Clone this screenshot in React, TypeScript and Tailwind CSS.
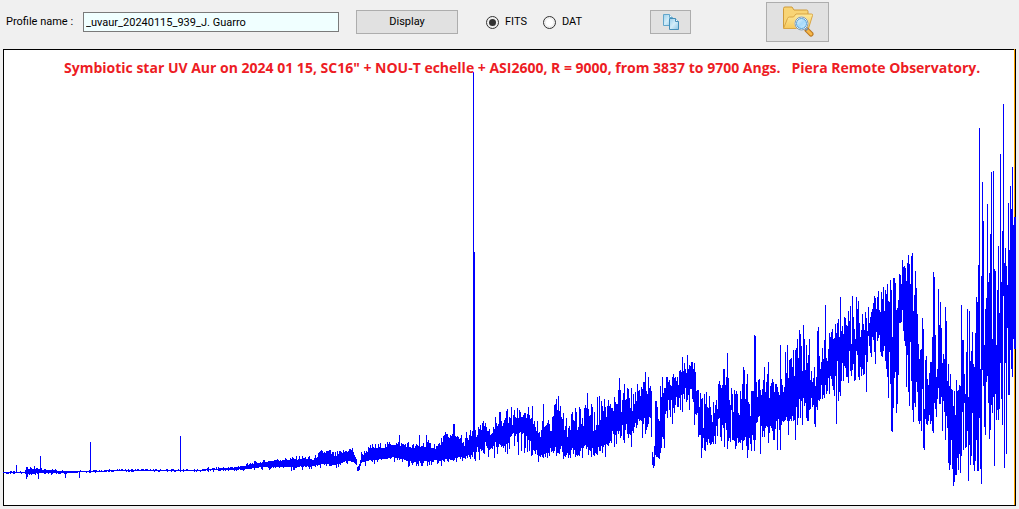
import { useState } from 'react';

// Faint blue end of the spectrum: [x, top, bottom, spread]
const faintEnd = [
  [3, 472, 473, 1],
  [24, 472, 473, 1],
  [26, 469, 474, 2],
  [42, 470, 473, 2],
  [60, 471, 473, 1],
  [90, 471, 472, 1],
  [120, 470, 471, 1],
  [200, 470, 471, 1],
  [208, 469, 470, 2],
  [232, 468, 470, 2],
  [245, 466, 469, 3],
  [260, 463, 467, 3],
  [275, 461, 467, 3],
  [290, 460, 467, 4],
  [308, 459, 466, 4],
  [313, 461, 466, 4],
  [320, 454, 464, 4],
  [329, 453, 464, 5],
  [335, 457, 465, 5],
  [346, 452, 461, 4],
  [352, 450, 460, 4],
  [356, 461, 465, 2],
  [357, 468, 471, 2],
  [359, 464, 470, 2],
  [361, 456, 462, 5],
  [371, 449, 460, 6],
  [385, 448, 459, 6],
  [393, 445, 457, 6],
  [402, 446, 459, 7],
  [413, 449, 462, 6],
  [422, 447, 461, 8],
  [437, 449, 460, 7],
  [445, 438, 459, 6],
  [455, 437, 458, 5],
  [460, 439, 457, 5],
];

// Lone lines that stand out of the faint end: [x, top, bottom]
const faintLines = [
  [16, 465, 473],
  [26, 467, 479],
  [27, 467, 477],
  [34, 466, 474],
  [38, 470, 479],
  [40, 456, 473],
  [65, 471, 478],
  [79, 471, 478],
  [90, 442, 472],
  [180, 436, 471],
  [399, 435, 460],
  [419, 435, 460],
  [426, 435, 460],
  [453, 424, 459],
  [454, 424, 459],
];

// Top and bottom of every column from x = 460 to the red edge
const BRIGHT_START = 460;
const brightEnd = `
438-459 435-457 443-461 442-458 446-458 438-459 432-456 438-458 440-455 435-457
430-459 436-455 431-457 72-452 252-459 430-461 437-452 435-447 427-452 429-460
425-449 430-451 423-450 421-453 426-454 423-442 427-446 431-448 431-457 429-450
435-449 434-448 433-449 427-446 429-458 417-442 423-447 426-454 424-447 412-444
412-445 421-447 426-446 423-448 420-446 418-452 411-444 409-454 423-443 417-449
418-437 407-436 425-434 415-433 410-446 417-436 418-434 408-442 418-455 410-433
412-432 417-451 417-434 415-433 413-453 413-448 418-436 414-452 407-440 415-451
419-441 418-456 406-455 424-450 421-451 427-454 431-450 421-455 433-462 432-456
437-457 430-455 421-457 404-458 427-454 426-457 425-453 423-458 420-453 424-456
431-448 431-452 417-451 416-453 405-451 404-447 399-456 410-453 396-453 411-454
406-449 417-446 419-452 413-459 430-456 426-457 418-455 437-453 428-458 426-455
430-458 414-450 412-448 420-454 421-450 408-457 412-455 430-456 427-455 407-456
409-451 424-448 418-458 426-448 408-446 405-445 408-449 393-447 409-455 416-450
415-451 404-457 407-448 431-455 412-456 430-453 425-454 397-455 425-447 396-451
420-451 401-446 406-453 411-447 399-445 407-457 417-444 406-445 400-446 406-443
404-441 408-443 408-431 411-434 397-447 402-435 404-444 404-431 390-434 378-431
390-438 412-436 400-425 393-440 384-443 400-430 399-424 388-434 389-438 398-434
408-435 388-447 411-431 394-433 404-427 392-423 401-428 384-425 391-419 390-421
396-420 387-421 389-438 382-424 382-418 372-434 391-430 394-427 377-424 388-417
386-418 391-437 452-465 457-468 446-466 401-455 401-457 407-457 419-458 421-459
386-453 397-448 377-437 393-439 388-448 388-414 377-411 377-418 382-400 380-410
385-417 386-400 377-424 374-408 378-413 377-405 381-397 377-407 385-407 371-398
370-410 372-395 357-412 371-394 363-399 369-388 373-402 355-400 369-395 365-410
366-389 362-389 362-399 369-402 363-425 372-414 391-415 390-413 390-437 407-435
393-435 399-458 398-448 428-438 394-450 404-451 392-442 407-445 408-439 396-443
407-445 415-444 422-442 402-444 413-436 405-444 400-426 409-436 384-419 381-418
385-437 388-441 385-425 369-428 369-447 385-423 377-430 353-449 378-441 400-438
405-442 388-410 394-440 412-440 390-441 394-449 391-446 394-438 413-443 415-442
391-443 399-440 384-450 367-441 370-440 399-437 384-446 374-458 402-450 404-438
416-444 391-451 391-435 391-440 335-451 336-440 382-423 397-422 380-417 379-416
390-454 395-426 389-437 380-431 367-437 392-428 382-426 374-427 362-443 398-433
386-426 383-428 379-431 382-440 392-440 384-429 384-421 387-450 392-419 395-430
345-450 379-425 385-421 392-422 387-421 352-420 373-417 345-421 378-435 360-421
359-419 358-421 367-416 350-421 376-420 350-440 348-407 339-425 358-418 330-399
334-418 346-401 371-425 325-398 339-406 370-403 345-418 363-421 355-421 339-410
380-409 371-398 382-407 378-405 367-424 386-427 377-407 331-410 327-400 356-401
369-399 362-385 348-399 359-395 340-398 305-385 358-394 361-391 349-378 333-394
337-376 332-379 329-386 339-390 338-396 324-376 333-424 323-361 319-401 337-392
297-396 331-381 326-363 334-381 317-366 318-368 325-377 326-377 311-383 321-351
306-371 344-376 296-370 317-364 329-381 339-380 297-351 309-355 301-377 323-380
337-367 330-376 314-369 324-375 330-374 312-355 318-392 331-362 307-336 323-346
317-353 312-357 309-337 303-340 296-352 298-364 309-332 297-341 291-338 310-335
312-352 292-356 299-357 287-351 311-346 290-361 294-369 284-377 301-398 302-352
280-384 290-431 337-432 278-408 278-378 283-372 310-413 308-404 300-375 274-323
275-323 284-322 260-310 267-331 266-341 268-346 281-387 263-355 255-392 264-406
284-342 256-381 253-410 311-422 295-403 271-407 288-382 314-392 344-421 359-424
350-421 349-431 318-389 329-448 409-450 360-419 356-424 379-425 385-421 373-415
362-424 362-421 337-431 272-433 277-403 335-409 377-417 369-399 289-388 325-404
302-404 328-397 363-431 354-401 359-412 307-440 321-416 381-428 364-463 386-470
374-465 389-440 390-469 406-486 391-482 415-475 380-475 391-458 390-470 385-454
386-473 305-456 340-412 340-450 374-403 394-448 352-447 309-431 397-481 311-445
361-465 351-456 332-413 364-465 367-471 333-461 297-440 302-471 265-471 128-418
369-469 276-484 182-370 221-386 345-427 309-435 298-382 204-376 282-403 273-439
234-430 172-405 339-413 171-397 269-466 271-394 345-420 290-410 246-420 313-409
154-363 282-399 231-425 104-296 263-468 248-363 266-454 285-328 203-395 250-395
186-350 209-369 167-377 225-339 217-349 217-349
`;

const noise = (n: number) => {
  const v = Math.sin(n * 12.9898) * 43758.5453;
  return v - Math.floor(v);
};

const bar = (x: number, top: number, bottom: number) =>
  `M${x} ${top}h1V${bottom}h-1z`;

function buildTrace() {
  const bars: string[] = [];

  for (let i = 0; i < faintEnd.length - 1; i++) {
    const [x0, top0, bottom0, spread] = faintEnd[i];
    const [x1, top1, bottom1] = faintEnd[i + 1];
    for (let x = x0; x < x1; x++) {
      const t = (x - x0) / (x1 - x0);
      const up = Math.pow(noise(x), 2) * spread;
      const down = Math.pow(noise(x + 500), 3) * spread;
      const top = Math.round(top0 + (top1 - top0) * t - up);
      const bottom = Math.round(bottom0 + (bottom1 - bottom0) * t + down);
      bars.push(bar(x, top, Math.max(bottom, top + 1)));
    }
  }

  faintLines.forEach(([x, top, bottom]) => bars.push(bar(x, top, bottom)));

  brightEnd
    .trim()
    .split(/\s+/)
    .forEach((column, i) => {
      const [top, bottom] = column.split('-').map(Number);
      bars.push(bar(BRIGHT_START + i, top, bottom));
    });

  return bars.join('');
}

const trace = buildTrace();

const CopyIcon = () => (
  <svg width="18" height="18" viewBox="0 0 18 18" aria-hidden="true">
    <defs>
      <linearGradient id="page" x1="0" y1="0" x2="1" y2="1">
        <stop offset="0" stopColor="#9bcfeb" />
        <stop offset="0.5" stopColor="#d3edf9" />
        <stop offset="1" stopColor="#8cc4e3" />
      </linearGradient>
    </defs>
    <path d="M1.5 1.5h6l3 3v8h-9z" fill="url(#page)" stroke="#62a6cb" />
    <path d="M7.5 1.5v3h3" fill="#f4fbff" stroke="#62a6cb" />
    <path d="M7.5 5.5h6l3 3v8h-9z" fill="url(#page)" stroke="#468fb8" />
    <path d="M13.5 5.5v3h3" fill="#f4fbff" stroke="#468fb8" />
  </svg>
);

const FolderSearchIcon = () => (
  <svg width="32" height="32" viewBox="0 0 32 32" aria-hidden="true">
    <defs>
      <linearGradient id="folder" x1="0" y1="0" x2="0" y2="1">
        <stop offset="0" stopColor="#fde99c" />
        <stop offset="1" stopColor="#f6c95c" />
      </linearGradient>
      <linearGradient id="lens" x1="0" y1="0" x2="1" y2="1">
        <stop offset="0" stopColor="#f0faff" />
        <stop offset="0.5" stopColor="#a5d9fa" />
        <stop offset="1" stopColor="#d8f1ff" />
      </linearGradient>
    </defs>
    <path
      d="M1.5 22V2.5q0-1.5 1.5-1.5h7l2 3h12.500q1.500 0 1.500 1.500V13"
      fill="#f8d475"
      stroke="#cf9a38"
    />
    <path
      d="M1.500 22.500L5.500 12.500q.5-1.500 2-1.500h4l2.500-3h15.500q1.500 0 1 1.500L26.500 22.500z"
      fill="url(#folder)"
      stroke="#d9a544"
    />
    <path
      d="M25 24l4 4"
      stroke="#b8741c"
      strokeWidth="5"
      strokeLinecap="round"
    />
    <path
      d="M25.500 24.500l3.500 3.500"
      stroke="#f7b84a"
      strokeWidth="3"
      strokeLinecap="round"
    />
    <path d="M23 21.500l2.500 2.500" stroke="#7f8d99" strokeWidth="3" />
    <circle cx="19.500" cy="17.500" r="6" fill="url(#lens)" stroke="#eef4f8" strokeWidth="2" />
    <circle cx="19.500" cy="17.500" r="6.500" fill="none" stroke="#8496a6" />
    <circle cx="19.500" cy="17.500" r="5" fill="none" stroke="#56a3da" />
  </svg>
);

type FormatOptionProps = {
  label: string;
  checked: boolean;
  onSelect: () => void;
};

const FormatOption = ({ label, checked, onSelect }: FormatOptionProps) => (
  <label className="flex items-center gap-1.5">
    <input
      type="radio"
      name="format"
      checked={checked}
      onChange={onSelect}
      className="size-[13px] appearance-none rounded-full border border-[#333] bg-white bg-clip-content p-[2px] checked:bg-[#333]"
    />
    {label}
  </label>
);

export default function App() {
  const [profile, setProfile] = useState('_uvaur_20240115_939_J. Guarro');
  const [format, setFormat] = useState('FITS');

  return (
    <main className="bg-[#f0f0f0] px-[3px] pb-[3px] font-[Roboto,sans-serif] text-[11px] leading-4 text-black">
      {/* Toolbar */}
      <div className="mb-[5px] flex h-11 items-center">
        <label htmlFor="profile" className="w-20 shrink-0 pl-[3px]">
          Profile name :
        </label>
        <input
          id="profile"
          type="text"
          value={profile}
          onChange={(e) => setProfile(e.target.value)}
          className="h-5 w-64 border border-[#7a7a7a] bg-[#f0ffff] px-[2px]"
        />
        <button className="ml-[17px] h-6 w-[102px] border border-[#adadad] bg-[#e1e1e1]">
          Display
        </button>
        <div className="ml-7 flex w-[164px] shrink-0 gap-4">
          <FormatOption
            label="FITS"
            checked={format === 'FITS'}
            onSelect={() => setFormat('FITS')}
          />
          <FormatOption
            label="DAT"
            checked={format === 'DAT'}
            onSelect={() => setFormat('DAT')}
          />
        </div>
        <button
          aria-label="Copy"
          className="flex h-6 w-[41px] items-center justify-center border border-[#adadad] bg-[#e1e1e1]"
        >
          <CopyIcon />
        </button>
        <button
          aria-label="Browse profiles"
          className="ml-[75px] flex h-10 w-[63px] items-center justify-center border border-[#adadad] bg-[#e1e1e1]"
        >
          <FolderSearchIcon />
        </button>
      </div>

      {/* Spectrum */}
      <figure className="relative border border-black bg-white">
        <svg
          viewBox="4 50 1011 455"
          preserveAspectRatio="none"
          shapeRendering="crispEdges"
          className="block h-[455px] w-full overflow-visible"
          aria-hidden="true"
        >
          <path d="M1014 49h1v456h-1z" fill="#ffa500" />
          <path d={trace} fill="#0000ff" />
        </svg>
        <figcaption className="absolute top-2 left-[60px] font-['Open_Sans',sans-serif] text-[14px] leading-5 font-bold whitespace-pre text-[#ed1c24]">
          Symbiotic star UV Aur on 2024 01 15, SC16" + NOU-T echelle + ASI2600, R = 9000, from 3837 to 9700 Angs.{'   '}Piera Remote Observatory.
        </figcaption>
      </figure>
    </main>
  );
}
